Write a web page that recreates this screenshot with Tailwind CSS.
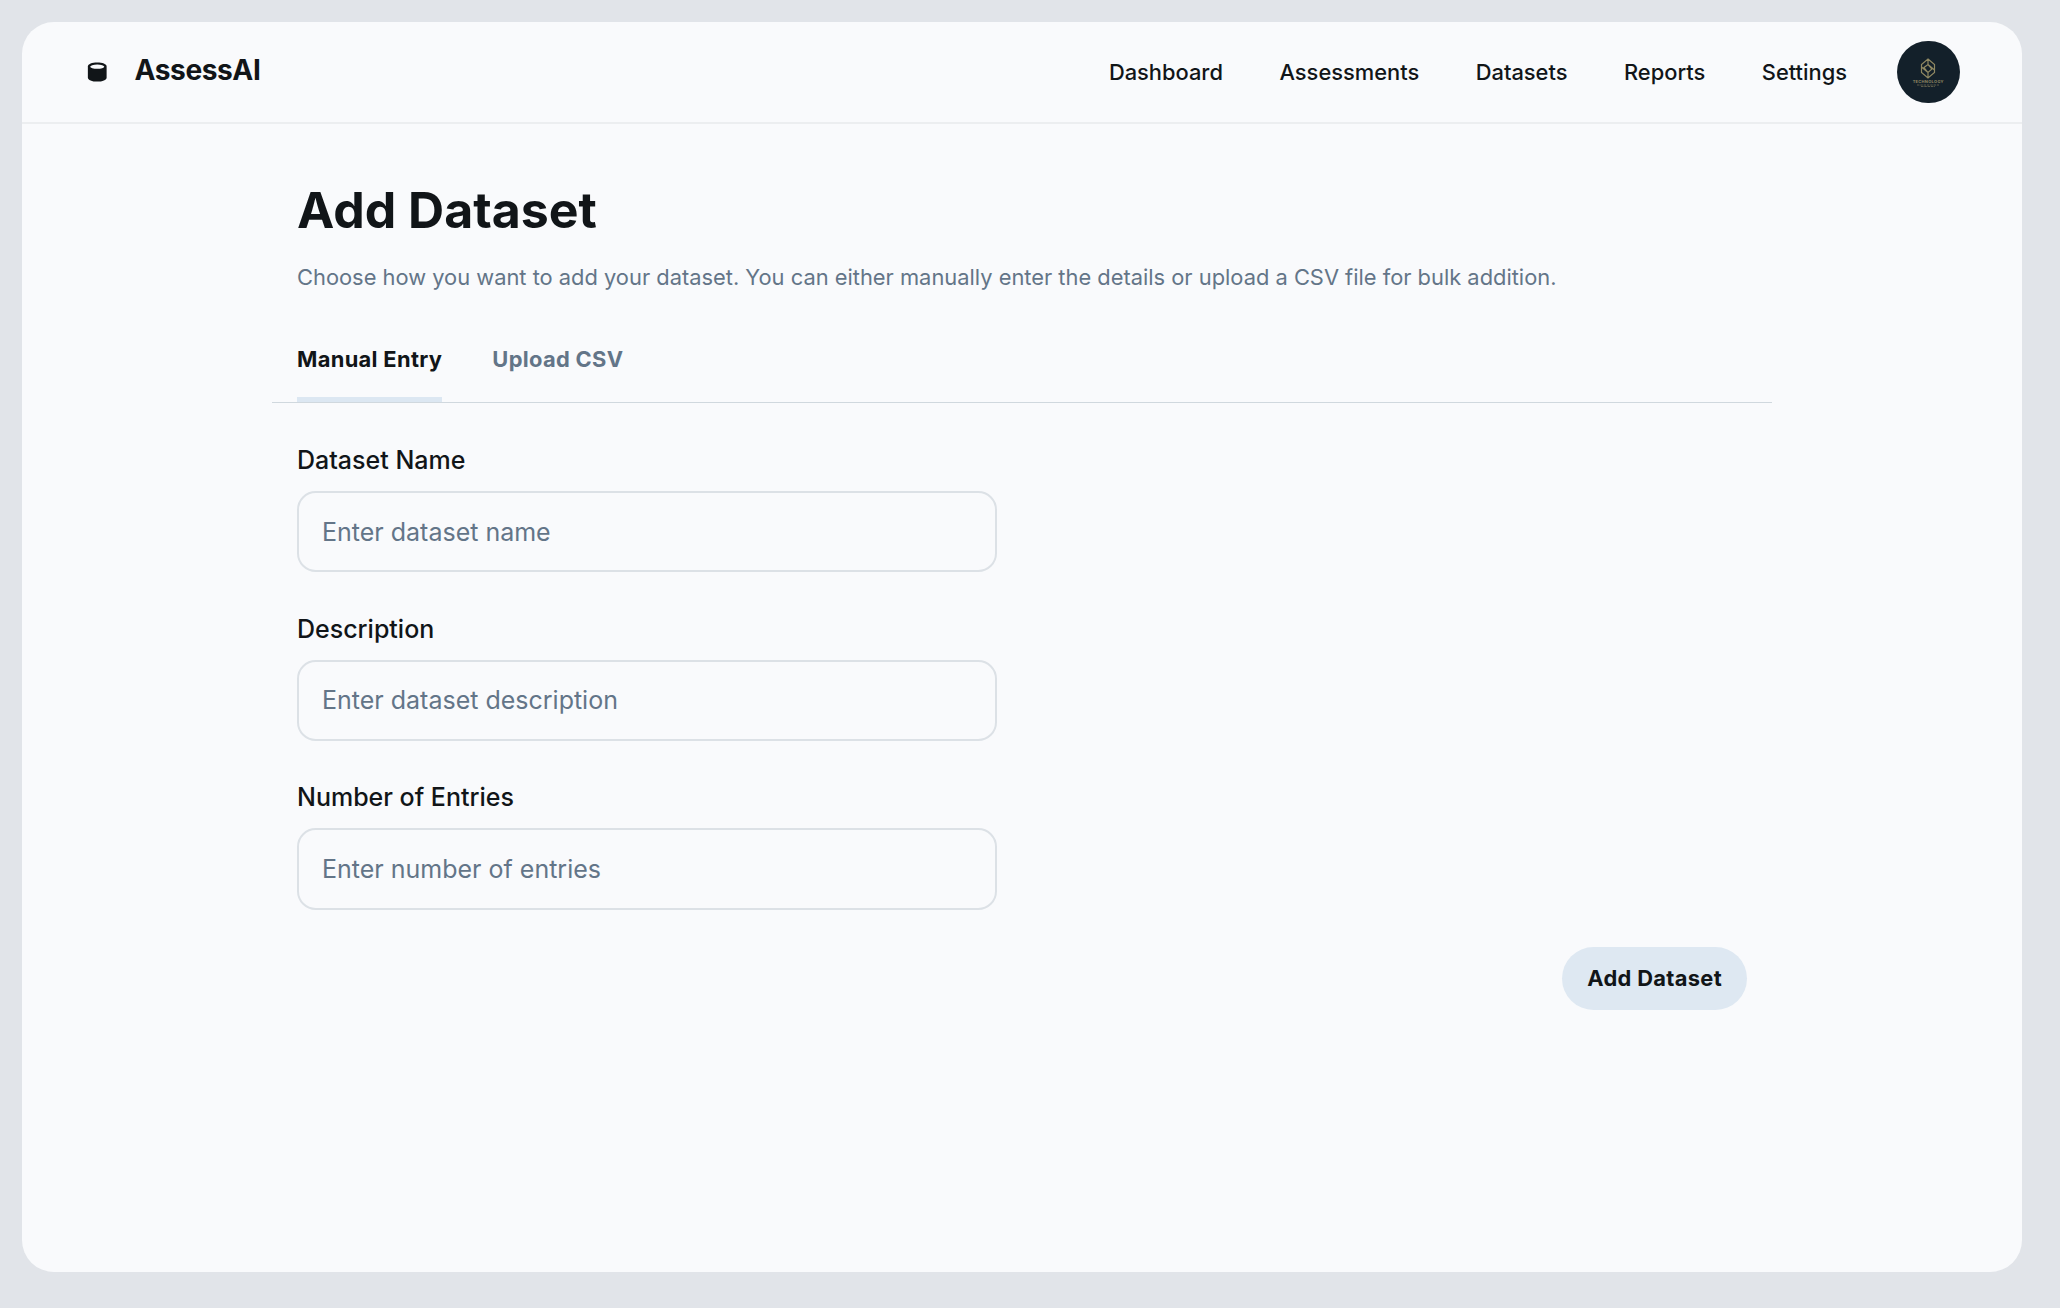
<!DOCTYPE html>
<html lang="en" class="text-[25px]">
<head>
<meta charset="utf-8">
<title>AssessAI - Add Dataset</title>
<script src="https://cdn.jsdelivr.net/npm/@tailwindcss/browser@4"></script>
</head>
<body class="h-[1308px] w-[2060px] overflow-hidden bg-[#e1e4e9] p-[22px] font-['Inter',sans-serif] text-[#111518]">
<div class="flex h-[1250px] w-[2000px] flex-col overflow-hidden rounded-[32px] bg-[#f9fafc]">
  <header class="flex items-center justify-between border-b-2 border-[#eceef0] px-10 py-3">
    <div class="flex items-center gap-4">
      <svg class="size-4" viewBox="0 0 48 48" fill="none">
        <path d="M5.500 12.500C5.500 8 13.500 5 23.500 5S41.500 8 41.500 12.500V34C41.500 38.500 33.500 41.500 23.500 41.500S5.500 38.500 5.500 34Z" fill="#111518"/>
        <ellipse cx="23.500" cy="12.800" rx="13.500" ry="4" fill="#f9fafc"/>
      </svg>
      <h2 class="pb-[3px] text-lg leading-tight font-bold tracking-[-0.015em]">AssessAI</h2>
    </div>
    <div class="flex items-center gap-8">
      <nav class="flex items-center gap-[56.5px] text-sm leading-normal font-medium">
        <a>Dashboard</a><a>Assessments</a><a>Datasets</a><a>Reports</a><a>Settings</a>
      </nav>
      <div class="flex size-10 flex-col items-center rounded-full bg-[#13202a] pt-[17px]">
        <svg class="h-[21px] w-[16px]" viewBox="0 0 16 21" fill="none" stroke="#8f8862" stroke-width="1.200">
          <path d="M8 1L14.500 6.500V14.500L8 20L1.500 14.500V6.500ZM8 1V6.500L14.500 12M8 20V14.500L1.500 9M4 9.500L8 6.500L12 11L8 14.500Z"/>
        </svg>
        <span class="mt-px text-[4px] leading-[4px] font-bold tracking-[0.300px] text-[#8f8862]">TECHNOLOGY</span>
        <svg class="h-[3px] w-[22px]" viewBox="0 0 22 3" stroke="#6e6b52" stroke-width="0.800">
          <path d="M0 1H22M4 2.500H18" stroke-dasharray="2.500 0.800"/>
        </svg>
      </div>
    </div>
  </header>
  <main class="flex flex-col px-40 pt-[30.400px] pb-5">
    <div class="flex flex-col gap-3 p-4">
      <h1 class="text-[50px] leading-tight font-bold">Add Dataset</h1>
      <p class="text-sm leading-normal text-[#637588]">Choose how you want to add your dataset. You can either manually enter the details or upload a CSV file for bulk addition.</p>
    </div>
    <div class="pb-[18.800px]">
      <div class="flex gap-8 border-b border-[#d0d8de] px-4 text-sm leading-normal font-bold tracking-[0.015em]">
        <a class="border-b-[5px] border-[#dce7f2] pt-4 pb-[21.100px]">Manual Entry</a>
        <a class="pt-4 text-[#637588]">Upload CSV</a>
      </div>
    </div>
    <label class="flex w-[750px] flex-col px-4 py-3">
      <span class="pt-px pb-[11.500px] text-base leading-normal font-medium">Dataset Name</span>
      <input class="h-[81.25px] rounded-[18.750px] border-2 border-[#dce1e6] px-[23px] text-base leading-normal placeholder:text-[#637588]" placeholder="Enter dataset name">
    </label>
    <label class="flex w-[750px] flex-col px-4 py-3">
      <span class="pt-px pb-[11.500px] text-base leading-normal font-medium">Description</span>
      <input class="h-[81.25px] rounded-[18.750px] border-2 border-[#dce1e6] px-[23px] text-base leading-normal placeholder:text-[#637588]" placeholder="Enter dataset description">
    </label>
    <label class="flex w-[750px] flex-col px-4 py-3">
      <span class="pt-px pb-[11.500px] text-base leading-normal font-medium">Number of Entries</span>
      <input class="h-[81.25px] rounded-[18.750px] border-2 border-[#dce1e6] px-[23px] text-base leading-normal placeholder:text-[#637588]" placeholder="Enter number of entries">
    </label>
    <div class="flex justify-end px-4 py-3">
      <button class="h-10 rounded-full bg-[#dee8f2] px-4 text-sm leading-normal font-bold tracking-[0.015em]">Add Dataset</button>
    </div>
  </main>
</div>
</body>
</html>
